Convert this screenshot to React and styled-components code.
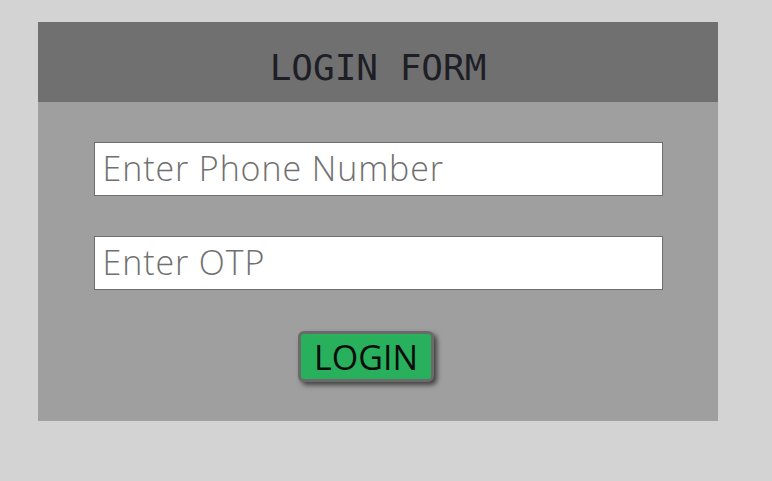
import React from "react"
import styled, { createGlobalStyle } from "styled-components"

const GlobalStyle = createGlobalStyle`
  body {
    margin: 0;
    background: #d3d3d3;
    font-family: "Open Sans", "Liberation Sans", sans-serif;
  }
`

const Page = styled.div`
  padding: 22px 0 0 38px;
  min-height: 481px;
  box-sizing: border-box;
`

const Card = styled.form`
  width: 680px;
  height: 399px;
  background: #9f9f9f;
  display: flex;
  flex-direction: column;
`

const Header = styled.div`
  height: 80px;
  background: #707070;
  display: flex;
  align-items: center;
  justify-content: center;
`

const Title = styled.h1`
  margin: 0;
  padding-top: 10px;
  font-family: "DejaVu Sans Mono", "Liberation Mono", monospace;
  font-weight: 400;
  font-size: 36px;
  color: #1e1e26;
`

const Body = styled.div`
  display: flex;
  flex-direction: column;
  align-items: center;
  padding-top: 40px;
`

const Input = styled.input`
  box-sizing: border-box;
  width: 569px;
  height: 54px;
  margin-bottom: ${(p) => p.$gap}px;
  border: 1px solid #6f6f6f;
  background: #fff;
  padding: 0 8px 2px;
  font-family: "Open Sans", "Liberation Sans", sans-serif;
  font-weight: 300;
  font-size: 34px;
  letter-spacing: 0.9px;
  color: #333;
  outline: none;

  &::placeholder {
    color: #707070;
  }
`

const Button = styled.button`
  box-sizing: border-box;
  width: 136px;
  height: 51px;
  margin-right: 24px;
  background: #28b05c;
  border: 3px solid #6a6a6a;
  border-radius: 6px;
  box-shadow: 3px 3px 5px rgba(0, 0, 0, 0.6);
  font-family: "Open Sans", "Liberation Sans", sans-serif;
  font-size: 34px;
  line-height: 1;
  color: #0c0c0c;
  padding: 0;
  cursor: pointer;
`

export default function App() {
  return (
    <Page>
      <GlobalStyle />
      <Card onSubmit={(e) => e.preventDefault()}>
        <Header>
          <Title>LOGIN FORM</Title>
        </Header>
        <Body>
          <Input type="tel" placeholder="Enter Phone Number" $gap={40} />
          <Input type="text" placeholder="Enter OTP" $gap={41} />
          <Button type="submit">LOGIN</Button>
        </Body>
      </Card>
    </Page>
  )
}
